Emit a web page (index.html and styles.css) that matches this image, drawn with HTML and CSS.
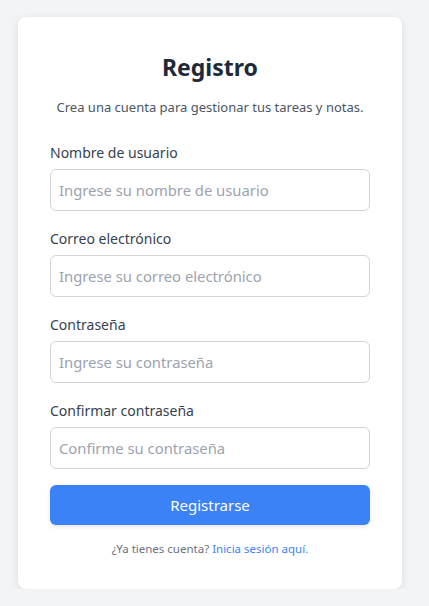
FILE: index.html
```html
<!DOCTYPE html>
<html lang="es">
<head>
<meta charset="utf-8">
<title>Registro</title>
<link rel="stylesheet" href="styles.css">
</head>
<body>
<div class="page">
  <form class="card">
    <h1 class="title">Registro</h1>
    <p class="subtitle">Crea una cuenta para gestionar tus tareas y notas.</p>
    <div class="field">
      <label class="label">Nombre de usuario</label>
      <input class="input" type="text" placeholder="Ingrese su nombre de usuario">
    </div>
    <div class="field">
      <label class="label">Correo electrónico</label>
      <input class="input" type="email" placeholder="Ingrese su correo electrónico">
    </div>
    <div class="field">
      <label class="label">Contraseña</label>
      <input class="input" type="password" placeholder="Ingrese su contraseña">
    </div>
    <div class="field">
      <label class="label">Confirmar contraseña</label>
      <input class="input" type="password" placeholder="Confirme su contraseña">
    </div>
    <button class="button" type="button">Registrarse</button>
    <p class="footer">¿Ya tienes cuenta? <a class="link" href="#">Inicia sesión aquí.</a></p>
  </form>
</div>
</body>
</html>
```
FILE: styles.css
```css
* { box-sizing: border-box; }
html, body { margin: 0; padding: 0; background: #f3f4f6; }
body { font-family: "Noto Sans", "Open Sans", sans-serif; }
.page { padding: 17px 0 0 18px; }
.card {
  width: 384px;
  background: #fff;
  border-radius: 8px;
  box-shadow: 0 2px 8px rgba(0,0,0,0.1);
  padding: 32px 32px 31px;
  display: flex;
  flex-direction: column;
}
.title {
  margin: 0;
  font-size: 23px;
  line-height: 36px;
  font-weight: 700;
  color: #1f2937;
  text-align: center;
}
.subtitle {
  margin: 12px 0 24px;
  font-size: 13px;
  line-height: 20px;
  color: #4b5563;
  text-align: center;
}
.field { display: flex; flex-direction: column; margin-bottom: 16px; }
.label {
  font-size: 14px;
  line-height: 24px;
  color: #374151;
  margin-bottom: 4px;
}
.input {
  height: 42px;
  border: 1px solid #d1d5db;
  border-radius: 6px;
  padding: 0 8px;
  font-family: inherit;
  font-size: 14.8px;
  color: #111827;
  outline: none;
}
.input::placeholder { color: #9ca3af; }
.button {
  height: 40px;
  border: none;
  border-radius: 6px;
  background: #3b82f6;
  color: #fff;
  font-family: inherit;
  font-size: 15px;
  box-shadow: 0 2px 4px rgba(0,0,0,0.1);
}
.footer {
  margin: 15px 0 0;
  font-size: 11.5px;
  line-height: 18px;
  color: #6b7280;
  text-align: center;
}
.link { color: #3b82f6; text-decoration: none; }
```
